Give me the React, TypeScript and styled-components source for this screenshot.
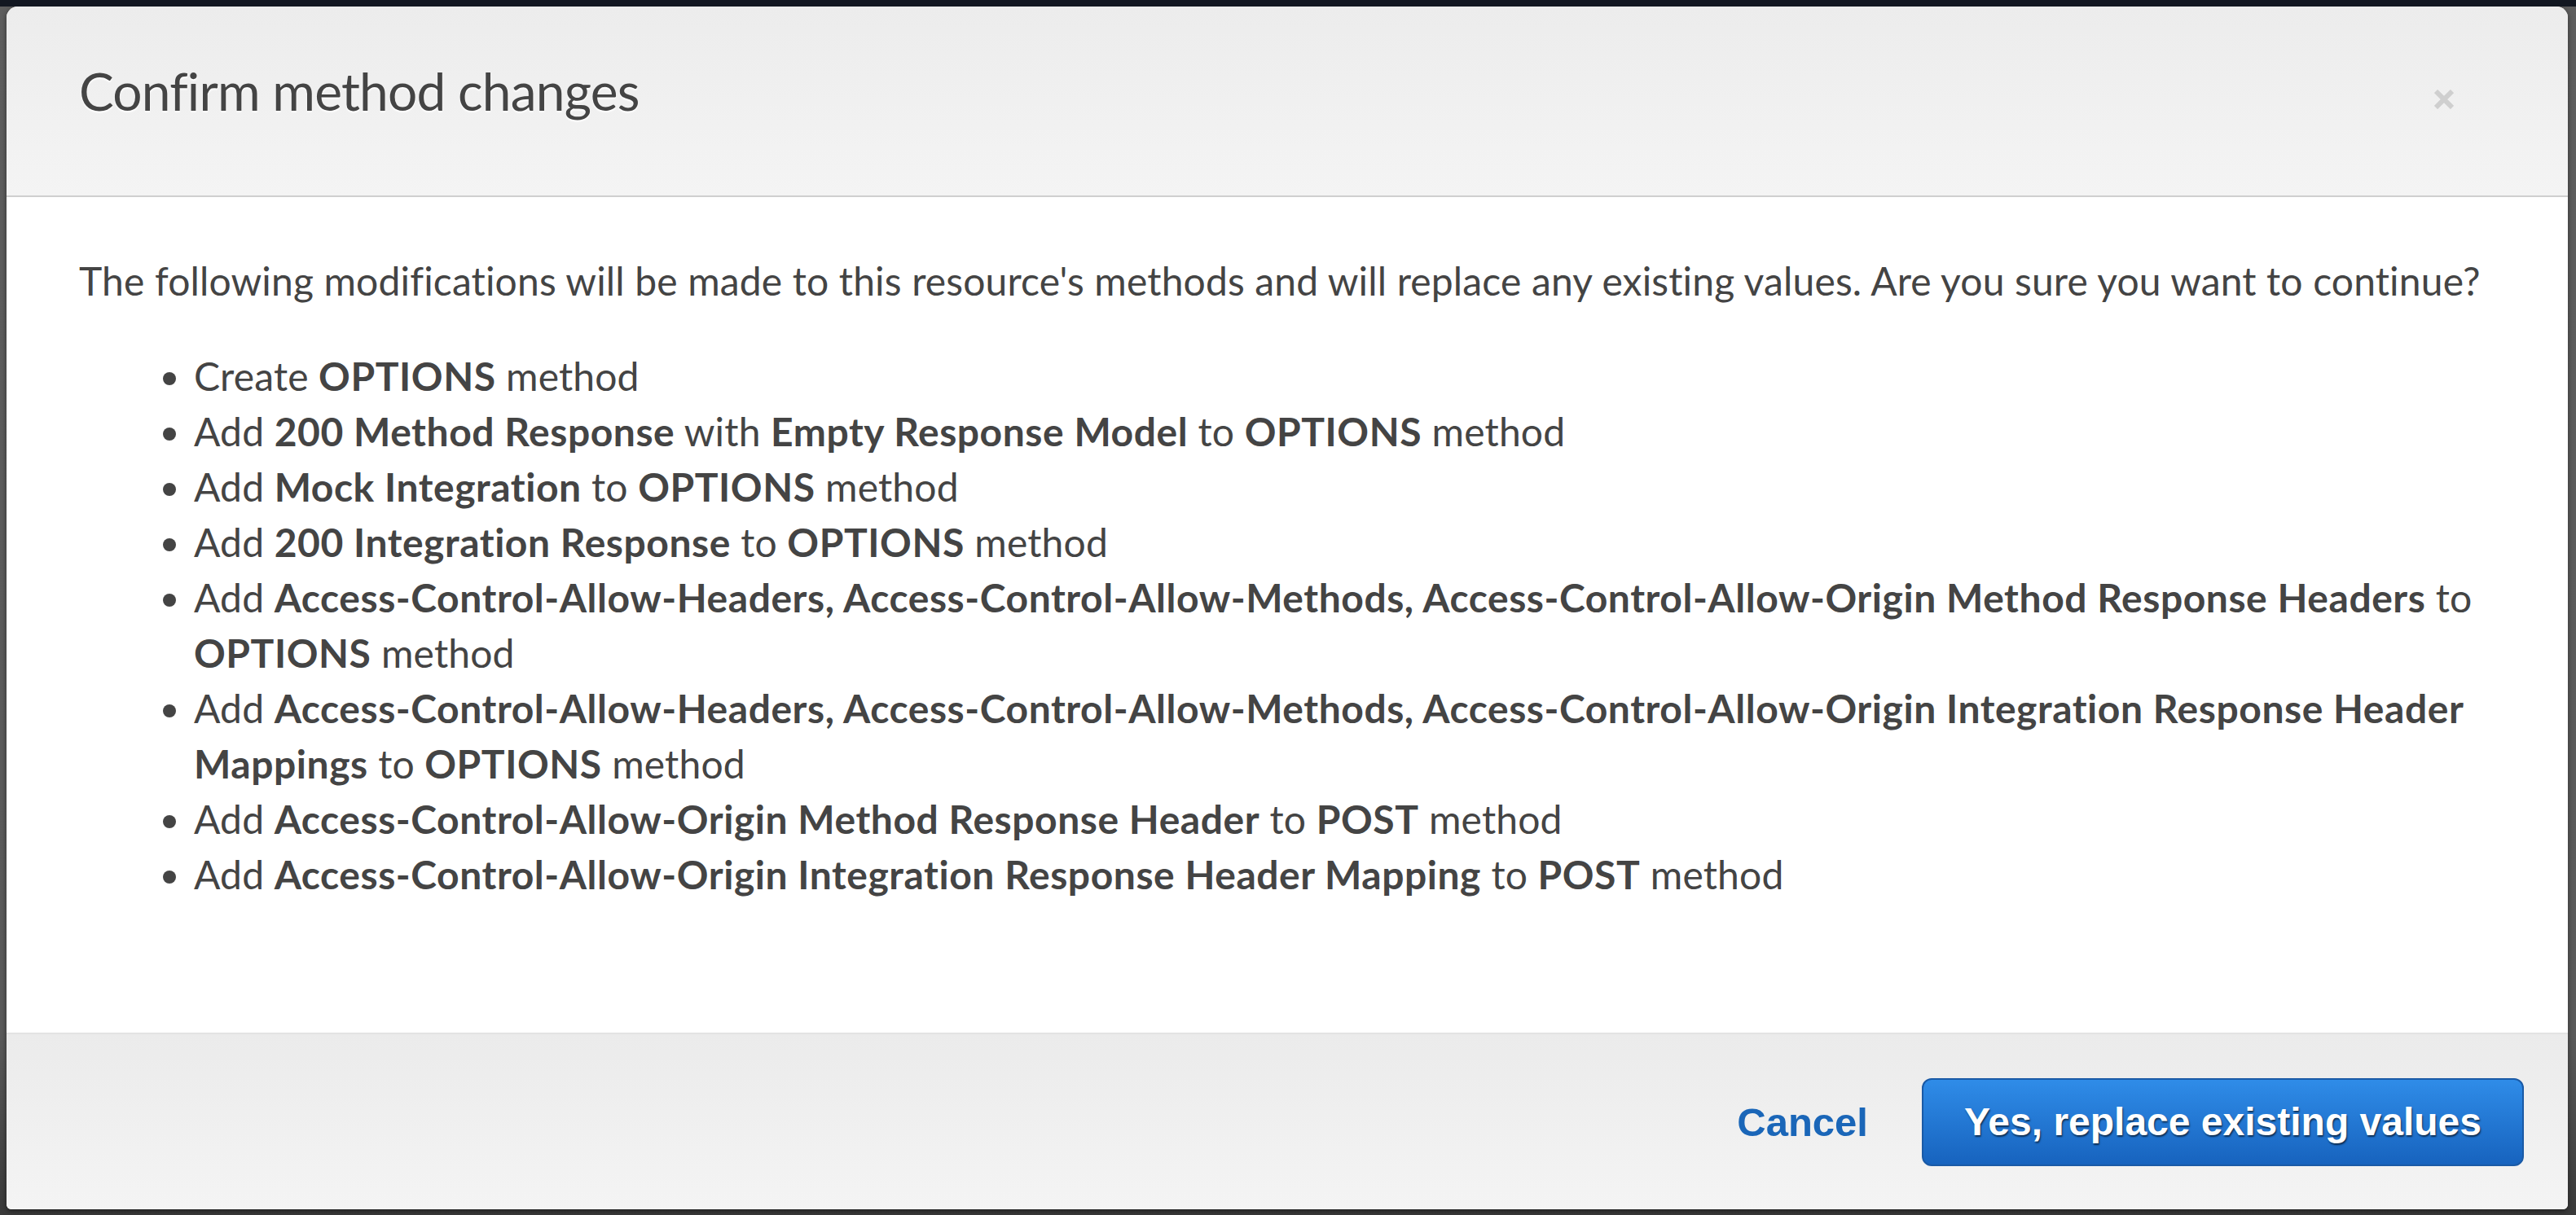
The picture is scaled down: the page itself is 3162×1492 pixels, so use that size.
import React from "react";
import styled, { createGlobalStyle } from "styled-components";

const GlobalStyle = createGlobalStyle`
  html, body {
    margin: 0;
    padding: 0;
  }
  body {
    background: #555;
    font-family: Lato, "Open Sans", sans-serif;
  }
`;

const Backdrop = styled.div`
  width: 3162px;
  height: 1492px;
  box-sizing: border-box;
  background: linear-gradient(to bottom, #5e5e5e 0%, #5a5a5a 85%, #3a3a3a 100%);
  border-top: 8px solid #121721;
  padding: 0 10px 7px 8px;
  display: flex;
  overflow: hidden;
`;

const Modal = styled.div`
  flex: 1;
  display: flex;
  flex-direction: column;
  background: #fff;
  border-radius: 14px 14px 6px 6px;
  overflow: hidden;
  box-shadow: 0 2px 6px rgba(0, 0, 0, 0.5);
`;

const Header = styled.div`
  height: 234px;
  flex: none;
  box-sizing: border-box;
  display: flex;
  align-items: flex-start;
  justify-content: space-between;
  padding: 66px 139px 0 89px;
  background: linear-gradient(to bottom, #ececec, #f4f4f4);
  border-bottom: 2px solid #cfcfcf;
`;

const Title = styled.h1`
  margin: 0;
  font-family: Lato, "Open Sans", sans-serif;
  font-weight: 400;
  font-size: 64px;
  line-height: 1.2;
  letter-spacing: -0.8px;
  color: #444;
  text-shadow: 0 2px 2px #fff;
`;

const CloseButton = styled.button`
  border: 0;
  background: none;
  padding: 0;
  width: 26px;
  height: 26px;
  margin-top: 35px;
  display: flex;
  align-items: center;
  justify-content: center;
  cursor: pointer;
`;

const Body = styled.div`
  flex: 1;
  padding: 69px 89px 0 89px;
  color: #444;
  font-family: Lato, "Open Sans", sans-serif;
  font-size: 48px;
  line-height: 68px;
  letter-spacing: 0.15px;
`;

const Intro = styled.p`
  margin: 0 0 49px 0;
`;

const ChangeList = styled.ul`
  margin: 0;
  padding-left: 141px;
  list-style: disc;
`;

const Item = styled.li`
  b {
    font-weight: 700;
    letter-spacing: 0.55px;
  }
`;

const Footer = styled.div`
  height: 217px;
  flex: none;
  box-sizing: border-box;
  border-top: 2px solid #e3e3e3;
  background: linear-gradient(to bottom, #ebebeb, #f4f4f4);
  display: flex;
  align-items: center;
  justify-content: flex-end;
  gap: 66px;
  padding: 0 54px 0 0;
`;

const LinkButton = styled.button`
  border: 0;
  background: none;
  padding: 0;
  font-family: "Liberation Sans", Arial, sans-serif;
  font-weight: 700;
  font-size: 49px;
  color: #1a66b8;
  cursor: pointer;
`;

const PrimaryButton = styled.button`
  height: 108px;
  box-sizing: border-box;
  padding: 0 50px;
  border: 2px solid #1a5aa6;
  border-radius: 12px;
  background: linear-gradient(to bottom, #2f8ce8, #1763be);
  color: #fff;
  font-family: "Liberation Sans", Arial, sans-serif;
  font-weight: 700;
  font-size: 48px;
  text-shadow: 1px 2px 2px rgba(0, 0, 0, 0.6);
  cursor: pointer;
`;

const items: React.ReactNode[] = [
  <>Create <b>OPTIONS</b> method</>,
  <>Add <b>200 Method Response</b> with <b>Empty Response Model</b> to <b>OPTIONS</b> method</>,
  <>Add <b>Mock Integration</b> to <b>OPTIONS</b> method</>,
  <>Add <b>200 Integration Response</b> to <b>OPTIONS</b> method</>,
  <>Add <b>Access-Control-Allow-Headers, Access-Control-Allow-Methods, Access-Control-Allow-Origin Method Response Headers</b> to <b>OPTIONS</b> method</>,
  <>Add <b>Access-Control-Allow-Headers, Access-Control-Allow-Methods, Access-Control-Allow-Origin Integration Response Header Mappings</b> to <b>OPTIONS</b> method</>,
  <>Add <b>Access-Control-Allow-Origin Method Response Header</b> to <b>POST</b> method</>,
  <>Add <b>Access-Control-Allow-Origin Integration Response Header Mapping</b> to <b>POST</b> method</>,
];

export default function App() {
  return (
    <>
      <GlobalStyle />
      <Backdrop>
        <Modal>
          <Header>
            <Title>Confirm method changes</Title>
            <CloseButton aria-label="Close">
              <svg width="24" height="24" viewBox="0 0 24 24">
                <path d="M2 2 L22 22 M22 2 L2 22" stroke="#cfcfcf" strokeWidth="6" />
              </svg>
            </CloseButton>
          </Header>
          <Body>
            <Intro>
              The following modifications will be made to this resource's methods and will replace any existing values. Are you sure you want to continue?
            </Intro>
            <ChangeList>
              {items.map((it, i) => (
                <Item key={i}>{it}</Item>
              ))}
            </ChangeList>
          </Body>
          <Footer>
            <LinkButton>Cancel</LinkButton>
            <PrimaryButton>Yes, replace existing values</PrimaryButton>
          </Footer>
        </Modal>
      </Backdrop>
    </>
  );
}
